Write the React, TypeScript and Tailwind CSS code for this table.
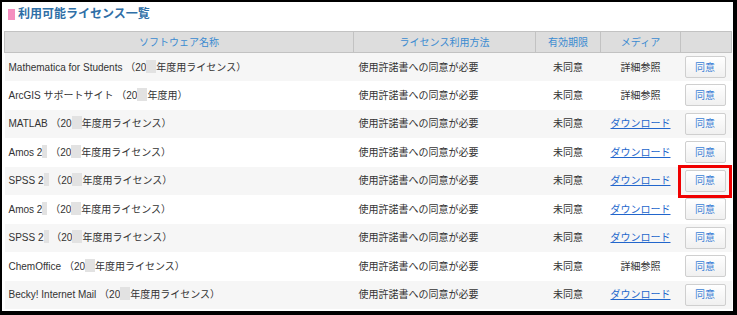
import React from 'react';

type Row = {
  name: React.ReactNode;
  media: 'detail' | 'download';
};

// censored digits in the original screenshot
function Blank({ w = 'w-[10px]' }: { w?: string }) {
  return <span className={`inline-block ${w} h-[13px] bg-[#e2e2e2] align-[-2px]`}></span>;
}

const rows: Row[] = [
  { name: <>Mathematica for Students （20<Blank />年度用ライセンス）</>, media: 'detail' },
  { name: <>ArcGIS サポートサイト （20<Blank />年度用）</>, media: 'detail' },
  { name: <>MATLAB （20<Blank />年度用ライセンス）</>, media: 'download' },
  { name: <>Amos 2<Blank w="w-[5px]" /> （20<Blank />年度用ライセンス）</>, media: 'download' },
  { name: <>SPSS 2<Blank w="w-[5px]" /> （20<Blank />年度用ライセンス）</>, media: 'download' },
  { name: <>Amos 2<Blank w="w-[5px]" /> （20<Blank />年度用ライセンス）</>, media: 'download' },
  { name: <>SPSS 2<Blank w="w-[5px]" /> （20<Blank />年度用ライセンス）</>, media: 'download' },
  { name: <>ChemOffice （20<Blank />年度用ライセンス）</>, media: 'detail' },
  { name: <>Becky! Internet Mail （20<Blank />年度用ライセンス）</>, media: 'download' },
];

function App() {
  return (
    <div className="w-[737px] h-[315px] bg-white border-black border-l-2 border-t-2 border-r-4 border-b-4 px-[2px] font-['Liberation_Sans','Noto_Sans_CJK_JP',sans-serif] text-[10px] text-[#333]">
      {/* heading */}
      <div className="flex items-center h-[12px] mt-[6px] ml-[4px] gap-[3px]">
        <span className="w-[7px] h-[11px] bg-[#f48fc0]"></span>
        <h2 className="text-[12px] leading-[12px] font-bold text-[#2f6fa7]">利用可能ライセンス一覧</h2>
      </div>

      <table className="w-[727px] mt-[11px] table-fixed border-collapse">
        <colgroup>
          <col className="w-[349px]" />
          <col className="w-[182px]" />
          <col className="w-[65px]" />
          <col className="w-[80px]" />
          <col className="w-[51px]" />
        </colgroup>
        <thead>
          <tr className="h-[21px] bg-[#dddddd] text-[#3b8bd1] font-normal">
            <th className="border border-[#c2c2c2] font-normal">ソフトウェア名称</th>
            <th className="border border-[#c2c2c2] font-normal">ライセンス利用方法</th>
            <th className="border border-[#c2c2c2] font-normal">有効期限</th>
            <th className="border border-[#c2c2c2] font-normal">メディア</th>
            <th className="border border-[#c2c2c2] font-normal"></th>
          </tr>
        </thead>
        <tbody>
          {rows.map((row, i) => (
            <tr key={i} className={`h-[28.5px] ${i % 2 === 0 ? 'bg-[#f6f6f6]' : 'bg-white'}`}>
              <td className="pl-[4px] whitespace-nowrap">{row.name}</td>
              <td className="pl-[5px]">使用許諾書への同意が必要</td>
              <td className="text-center">未同意</td>
              <td className="text-center">
                {row.media === 'detail' ? (
                  '詳細参照'
                ) : (
                  <a href="#" className="text-[#2266cc] underline">ダウンロード</a>
                )}
              </td>
              <td className="relative">
                <div className="flex justify-center pr-[2px]">
                  <button className="w-[41px] h-[22px] border border-[#cfcfcf] rounded-[2px] bg-gradient-to-b from-white to-[#f0f0f0] text-[#3b7fd6] text-[10px]">
                    同意
                  </button>
                </div>
                {i === 4 && (
                  <span className="absolute left-[-3px] top-[-2px] w-[54px] h-[33px] border-[3px] border-[#f00000]"></span>
                )}
              </td>
            </tr>
          ))}
        </tbody>
      </table>
    </div>
  );
}

export default App;
